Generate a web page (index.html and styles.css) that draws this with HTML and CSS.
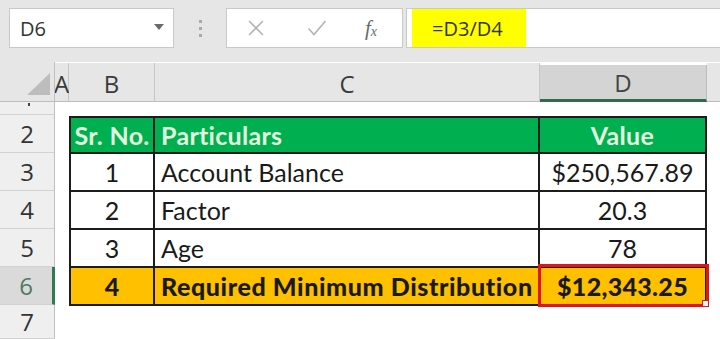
FILE: index.html
```html
<!DOCTYPE html>
<html>
<head>
<meta charset="utf-8">
<link rel="stylesheet" href="styles.css">
</head>
<body>
<div class="app">
  <div class="toolbar">
    <div class="namebox">
      <span class="nb-text">D6</span>
      <svg class="nb-arrow" width="10" height="6" viewBox="0 0 10 6"><path d="M0 0 H10 L5 6 Z" fill="#6b6b6b"/></svg>
    </div>
    <div class="grip"><i></i><i></i><i></i></div>
    <div class="fbtns">
      <svg class="ico" width="18" height="18" viewBox="0 0 18 18"><path d="M2 2 L16 16 M16 2 L2 16" stroke="#b4b4b4" stroke-width="1.6" fill="none"/></svg>
      <svg class="ico" width="20" height="18" viewBox="0 0 20 18"><path d="M1.5 9.5 L7 15.5 L18.5 2" stroke="#b4b4b4" stroke-width="1.6" fill="none"/></svg>
      <span class="fx">f<sub>x</sub></span>
    </div>
    <div class="finput"><span class="hl">=D3/D4</span></div>
  </div>
  <div class="sheet">
    <div class="corner"><div class="tri"></div></div>
    <div class="ch">A</div>
    <div class="ch">B</div>
    <div class="ch">C</div>
    <div class="ch sel">D</div>
    <div class="ch last"></div>

    <div class="rh r1"><span class="dot"></span></div>
    <div class="rh">2</div>
    <div class="rh">3</div>
    <div class="rh">4</div>
    <div class="rh">5</div>
    <div class="rh rsel">6</div>
    <div class="rh">7</div>

    <div class="tbl">
      <div class="c hd ctr top lft">Sr. No.</div>
      <div class="c hd top">Particulars</div>
      <div class="c hd ctr top">Value</div>

      <div class="c ctr lft">1</div>
      <div class="c">Account Balance</div>
      <div class="c ctr">$250,567.89</div>

      <div class="c ctr lft">2</div>
      <div class="c">Factor</div>
      <div class="c ctr">20.3</div>

      <div class="c ctr lft">3</div>
      <div class="c">Age</div>
      <div class="c ctr">78</div>

      <div class="c tot ctr lft">4</div>
      <div class="c tot wide">Required Minimum Distribution</div>
      <div class="c tot ctr active">$12,343.25</div>
    </div>
  </div>
</div>
</body>
</html>
```
FILE: styles.css
```css
* { box-sizing: border-box; }
html, body { margin: 0; padding: 0; }
body { width: 720px; height: 339px; overflow: hidden; background: #fff; font-family: "Open Sans", "Noto Sans", sans-serif; }
.app { width: 720px; height: 339px; display: flex; flex-direction: column; }

.toolbar { height: 62px; background: #e6e6e6; display: flex; align-items: flex-start; padding: 8px 0 0 9px; }
.namebox { width: 165px; height: 40px; background: #fff; border: 1px solid #c9c9c9; display: flex; align-items: center; justify-content: space-between; padding: 0 9px 0 10px; }
.nb-text { font-size: 20px; color: #333; }
.nb-arrow { margin-top: -3px; }
.grip { width: 52px; height: 40px; display: flex; flex-direction: column; align-items: center; justify-content: center; gap: 4px; }
.grip i { width: 3px; height: 3px; background: #a9a9a9; display: block; }
.fbtns { width: 177px; height: 40px; background: #fff; border: 1px solid #c9c9c9; display: flex; align-items: center; padding-left: 20px; gap: 42px; }
.fx { font-family: "Liberation Serif", serif; font-style: italic; font-size: 21px; color: #6a6a6a; margin-left: -4px; }
.fx sub { font-size: 14px; vertical-align: -1px; }
.finput { flex: 1; height: 40px; margin-left: 3px; background: #fff; border: 1px solid #c9c9c9; border-right: none; padding: 0 0 0 5px; display: flex; }
.hl { background: #ffff00; width: 114px; height: 38px; display: flex; align-items: center; padding-left: 20px; font-size: 20px; color: #333; }

.sheet { flex: 1; display: grid; grid-template-columns: 55px 14px 86px 385px 167px 1fr; grid-template-rows: 40px 13px repeat(5, 38px) 1fr; background: #fff; }
.corner { background: #e6e6e6; border-right: 1px solid #c0c0c0; border-bottom: 1px solid #bdbdbd; position: relative; }
.tri { position: absolute; left: 27px; top: 11px; width: 0; height: 0; border-left: 23px solid transparent; border-bottom: 22px solid #bdbdbd; }
.ch { background: #e6e6e6; border-right: 1px solid #c6c6c6; border-bottom: 1px solid #bdbdbd; display: flex; align-items: center; justify-content: center; font-size: 24px; color: #3a3a3a; margin-top: 1px; padding-top: 2px; }
.ch.sel { background: #d4d4d4; margin-top: 3px; border-bottom: 3px solid #2f6b4f; border-right: 1px solid #bdbdbd; color: #444; padding-top: 0; }
.ch.last { border-right: none; }

.rh { grid-column: 1; background: #efefef; border-right: 1px solid #c0c0c0; border-bottom: 1px solid #d2d2d2; display: flex; align-items: center; justify-content: center; font-size: 24px; color: #333; }
.rh.r1 { align-items: flex-start; }
.dot { width: 2px; height: 3px; background: #444; margin-top: 1px; margin-left: 3px; }
.rh.rsel { background: #dadada; border-right: 3px solid #2f7a52; color: #4d7a63; }

.tbl { grid-column: 3 / 6; grid-row: 3 / 8; display: grid; grid-template-columns: 86px 385px 167px; grid-template-rows: repeat(5, 38px); font-family: "Lato", "Open Sans", sans-serif; font-size: 25px; color: #1a1a1a; margin-top: 1px; }
.c { border-right: 2px solid #1c1c1c; border-bottom: 2px solid #1c1c1c; display: flex; align-items: center; padding-left: 6px; white-space: nowrap; }
.c.top { border-top: 2px solid #1c1c1c; }
.c.lft { border-left: 2px solid #1c1c1c; }
.c.ctr { justify-content: center; padding-left: 0; }
.hd { background: #00b050; color: #e3f5df; font-weight: bold; letter-spacing: 0.3px; }
.tot { background: #ffc000; font-weight: 900; color: #1a1a1a; }
.tot.wide { letter-spacing: 0.6px; }
.active { position: relative; letter-spacing: 0.3px; }
.active::after { content: ""; position: absolute; left: -2px; top: -4px; right: -4px; bottom: -3px; border: 3px solid #e3131c; }
.active::before { content: ""; position: absolute; right: -4px; bottom: -3px; width: 5px; height: 5px; background: #fff; border: 1px solid #e3131c; z-index: 2; }
```
